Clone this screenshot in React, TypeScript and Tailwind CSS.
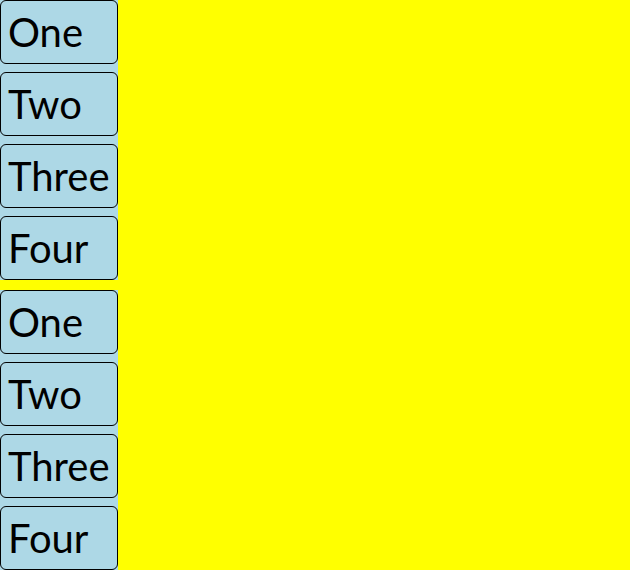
const items = ['One', 'Two', 'Three', 'Four']

function Group() {
  return (
    <div className="flex w-[118px] flex-col gap-2 bg-[#add8e6]">
      {items.map((item) => (
        <div
          key={item}
          className="flex h-16 items-center rounded-md border border-black bg-[#add8e6] px-[7px]"
        >
          {item}
        </div>
      ))}
    </div>
  )
}

export default function App() {
  return (
    <div className="flex h-[570px] w-[630px] flex-col gap-2.5 bg-[#ffff00] font-['Lato',sans-serif] text-[40px] leading-none text-black">
      <Group />
      <Group />
    </div>
  )
}
